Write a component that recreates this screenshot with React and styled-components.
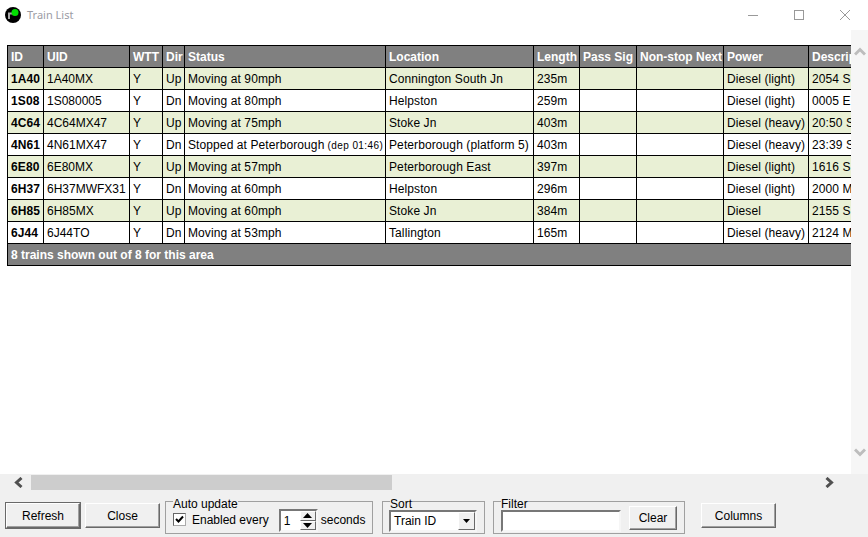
import React from 'react';
import styled, { createGlobalStyle } from 'styled-components';

const GlobalStyle = createGlobalStyle`
  html, body {
    margin: 0;
    padding: 0;
    overflow: hidden;
    background: #f0f0f0;
  }
`;

const Window = styled.div`
  width: 868px;
  height: 537px;
  display: flex;
  flex-direction: column;
  overflow: hidden;
  background: #f0f0f0;
  font-family: 'Liberation Sans', Arial, sans-serif;
`;

const TitleBar = styled.div`
  height: 30px;
  flex: none;
  display: flex;
  align-items: center;
  background: #fff;
  padding-left: 5px;
`;

const Title = styled.span`
  margin: 0 0 2px 6px;
  font-family: 'Noto Sans', sans-serif;
  font-size: 11px;
  color: #9c9ca4;
`;

const WindowButtons = styled.div`
  margin-left: auto;
  display: flex;
`;

const WindowButton = styled.div`
  width: 46px;
  height: 30px;
  display: flex;
  align-items: center;
  justify-content: center;
`;

const Middle = styled.div`
  height: 444px;
  flex: none;
  display: flex;
  background: #fff;
`;

const TableArea = styled.div`
  flex: 1;
  min-width: 0;
  overflow: hidden;
  padding: 15px 0 0 7px;
`;

const Table = styled.table`
  border-collapse: collapse;
  table-layout: fixed;
  width: 921px;
  font-size: 12px;
  color: #000;
`;

const HeadCell = styled.th`
  height: 21px;
  padding: 0 3px;
  border: 1px solid #000;
  background: #808080;
  color: #fff;
  font-weight: bold;
  text-align: left;
  white-space: nowrap;
  overflow: hidden;
`;

const Row = styled.tr`
  background: ${(p) => (p.$odd ? '#e9f0d5' : '#fff')};
`;

const Cell = styled.td`
  height: 21px;
  padding: 0 3px;
  border: 1px solid #000;
  font-weight: ${(p) => (p.$bold ? 'bold' : 'normal')};
  letter-spacing: ${(p) => (p.$tight ? '0' : '0.1px')};
  white-space: nowrap;
  overflow: hidden;
`;

const Footer = styled.td`
  height: 21px;
  padding: 0 3px;
  border: 1px solid #000;
  background: #808080;
  color: #fff;
  font-weight: bold;
  white-space: nowrap;
`;

const Small = styled.span`
  font-size: 10px;
  letter-spacing: 0.4px;
`;

const VScroll = styled.div`
  width: 17px;
  flex: none;
  display: flex;
  flex-direction: column;
  justify-content: space-between;
  align-items: center;
  background: #f6f6f6;
  padding: 17px 0 17px;
  box-sizing: border-box;
`;

const HScroll = styled.div`
  height: 17px;
  flex: none;
  display: flex;
  align-items: center;
  background: #f0f0f0;
`;

const ArrowBox = styled.div`
  width: 17px;
  flex: none;
  margin: ${(p) => p.$m};
  display: flex;
  align-items: center;
  justify-content: center;
`;

const HTrack = styled.div`
  flex: 1;
  height: 15px;
`;

const HThumb = styled.div`
  width: 361px;
  height: 100%;
  background: #cdcdcd;
`;

const Toolbar = styled.div`
  flex: 1;
  display: flex;
  align-items: flex-start;
  padding: 10px 0 0 5px;
`;

const Button = styled.button`
  width: ${(p) => p.$w}px;
  height: ${(p) => p.$h || 25}px;
  margin: ${(p) => p.$m || '0'};
  padding: 0;
  flex: none;
  background: #f0f0f0;
  border: 1px solid;
  border-color: #fff #696969 #696969 #fff;
  box-shadow: ${(p) =>
    p.$default
      ? '0 0 0 1px #696969, inset -1px -1px 0 #a0a0a0'
      : 'inset -1px -1px 0 #a0a0a0'};
  font-family: inherit;
  font-size: 12px;
  color: #000;
`;

const Group = styled.fieldset`
  box-sizing: border-box;
  width: ${(p) => p.$w}px;
  height: 33px;
  margin: 0 0 0 ${(p) => p.$ml}px;
  padding: 6px 0 0 ${(p) => p.$pl || 7}px;
  flex: none;
  display: flex;
  align-items: center;
  border: 1px solid #a0a0a0;
  font-size: 12px;
  position: relative;
`;

const Legend = styled.span`
  position: absolute;
  top: -4px;
  left: 7px;
  line-height: 12px;
  font-size: 12px;
  background: #f0f0f0;
`;

const CheckLabel = styled.label`
  display: flex;
  align-items: center;
  margin-bottom: 2px;
`;

const Check = styled.div`
  width: 11px;
  height: 11px;
  flex: none;
  border: 1px solid;
  border-color: #666 #aaa #aaa #666;
  background: #fff;
  display: flex;
  align-items: center;
  justify-content: center;
  margin-right: 6px;
`;

const SunkenField = styled.div`
  box-sizing: border-box;
  width: ${(p) => p.$w}px;
  height: ${(p) => p.$h}px;
  flex: none;
  display: flex;
  align-items: center;
  padding-left: 3px;
  margin: ${(p) => p.$m || '0'};
  background: #fff;
  border: 2px solid;
  border-color: #777 #f6f6f6 #f6f6f6 #777;
`;

const SpinButtons = styled.div`
  margin-left: auto;
  width: 16px;
  height: 100%;
  display: flex;
  flex-direction: column;
`;

const SpinButton = styled.div`
  flex: 1;
  background: #f0f0f0;
  border: 1px solid;
  border-color: #fff #696969 #696969 #fff;
  display: flex;
  align-items: center;
  justify-content: center;
`;

const DropButton = styled.div`
  margin-left: auto;
  width: 17px;
  height: 100%;
  box-sizing: border-box;
  background: #f0f0f0;
  border: 1px solid;
  border-color: #fff #696969 #696969 #fff;
  display: flex;
  align-items: center;
  justify-content: center;
`;

const columns = [36, 86, 33, 22, 201, 148, 46, 57, 87, 85, 120];
const heads = ['ID', 'UID', 'WTT', 'Dir', 'Status', 'Location', 'Length', 'Pass Sig', 'Non-stop Next', 'Power', 'Description'];

const trains = [
  ['1A40', '1A40MX', 'Up', 'Moving at 90mph', 'Connington South Jn', '235m', 'Diesel (light)', '2054 S'],
  ['1S08', '1S080005', 'Dn', 'Moving at 80mph', 'Helpston', '259m', 'Diesel (light)', '0005 E'],
  ['4C64', '4C64MX47', 'Up', 'Moving at 75mph', 'Stoke Jn', '403m', 'Diesel (heavy)', '20:50 S'],
  ['4N61', '4N61MX47', 'Dn', 'Stopped at Peterborough', 'Peterborough (platform 5)', '403m', 'Diesel (heavy)', '23:39 S'],
  ['6E80', '6E80MX', 'Up', 'Moving at 57mph', 'Peterborough East', '397m', 'Diesel (light)', '1616 S'],
  ['6H37', '6H37MWFX31', 'Dn', 'Moving at 60mph', 'Helpston', '296m', 'Diesel (light)', '2000 M'],
  ['6H85', '6H85MX', 'Up', 'Moving at 60mph', 'Stoke Jn', '384m', 'Diesel', '2155 S'],
  ['6J44', '6J44TO', 'Dn', 'Moving at 53mph', 'Tallington', '165m', 'Diesel (heavy)', '2124 M'],
];

const VChevron = ({ down }) => (
  <svg width="12" height="9" viewBox="0 0 12 9">
    <path d={down ? 'M1 1.5 L6 6.5 L11 1.5' : 'M1 7.5 L6 2.5 L11 7.5'} fill="none" stroke="#bdbdbd" strokeWidth="3" />
  </svg>
);

const HChevron = ({ right }) => (
  <svg width="9" height="11" viewBox="0 0 9 11">
    <path d={right ? 'M1.5 1 L6.5 5.5 L1.5 10' : 'M7.5 1 L2.5 5.5 L7.5 10'} fill="none" stroke="#505050" strokeWidth="3" />
  </svg>
);

const Triangle = ({ down, w = 7, h = 4 }) => (
  <svg width={w} height={h} viewBox={`0 0 ${w} ${h}`}>
    <path d={down ? `M0 0 H${w} L${w / 2} ${h} Z` : `M0 ${h} H${w} L${w / 2} 0 Z`} fill="#000" />
  </svg>
);

const Logo = () => (
  <svg width="16" height="16" viewBox="0 0 16 16">
    <circle cx="8" cy="8" r="8" fill="#000" />
    <path d="M4 12 V6.5 H8" fill="none" stroke="#aaa" strokeWidth="2" />
    <circle cx="10" cy="5.5" r="3.5" fill="#00e000" />
  </svg>
);

const App = () => {
  return (
    <Window>
      <GlobalStyle />
      <TitleBar>
        <Logo />
        <Title>Train List</Title>
        <WindowButtons>
          <WindowButton>
            <svg width="10" height="10" viewBox="0 0 10 10"><path d="M0 5.5 H10" stroke="#999" /></svg>
          </WindowButton>
          <WindowButton>
            <svg width="10" height="10" viewBox="0 0 10 10"><rect x="0.5" y="0.5" width="9" height="9" fill="none" stroke="#999" /></svg>
          </WindowButton>
          <WindowButton>
            <svg width="10" height="10" viewBox="0 0 10 10"><path d="M0 0 L10 10 M10 0 L0 10" stroke="#999" /></svg>
          </WindowButton>
        </WindowButtons>
      </TitleBar>
      <Middle>
        <TableArea>
          <Table>
            <colgroup>
              {columns.map((w, i) => <col key={i} style={{ width: w }} />)}
            </colgroup>
            <thead>
              <tr>
                {heads.map((h) => <HeadCell key={h}>{h}</HeadCell>)}
              </tr>
            </thead>
            <tbody>
              {trains.map((t, i) => (
                <Row key={t[0]} $odd={i % 2 === 0}>
                  <Cell $bold>{t[0]}</Cell>
                  <Cell $tight>{t[1]}</Cell>
                  <Cell>Y</Cell>
                  <Cell>{t[2]}</Cell>
                  <Cell>
                    {t[3]}
                    {t[0] === '4N61' && <Small> (dep 01:46)</Small>}
                  </Cell>
                  <Cell>{t[4]}</Cell>
                  <Cell>{t[5]}</Cell>
                  <Cell />
                  <Cell />
                  <Cell>{t[6]}</Cell>
                  <Cell>{t[7]}</Cell>
                </Row>
              ))}
              <tr>
                <Footer colSpan={11}>8 trains shown out of 8 for this area</Footer>
              </tr>
            </tbody>
          </Table>
        </TableArea>
        <VScroll>
          <VChevron />
          <VChevron down />
        </VScroll>
      </Middle>
      <HScroll>
        <ArrowBox $m="0 4px 0 10px"><HChevron /></ArrowBox>
        <HTrack><HThumb /></HTrack>
        <ArrowBox $m="0 30px 0 0"><HChevron right /></ArrowBox>
      </HScroll>
      <Toolbar>
        <Button $w={74} $default $m="2px 0 0 1px">Refresh</Button>
        <Button $w={75} $m="2px 0 0 5px">Close</Button>
        <Group $w={208} $ml={5}>
          <Legend>Auto update</Legend>
          <CheckLabel>
            <Check>
              <svg width="9" height="9" viewBox="0 0 9 9"><path d="M1 4 L3.5 6.5 L8 1.5" fill="none" stroke="#000" strokeWidth="2" /></svg>
            </Check>
            Enabled every
          </CheckLabel>
          <SunkenField $w={39} $h={23} $m="0 3px 0 10px">
            1
            <SpinButtons>
              <SpinButton><Triangle w={9} h={5} /></SpinButton>
              <SpinButton><Triangle w={9} h={5} down /></SpinButton>
            </SpinButtons>
          </SunkenField>
          <CheckLabel>seconds</CheckLabel>
        </Group>
        <Group $w={103} $ml={9} $pl={6}>
          <Legend>Sort</Legend>
          <SunkenField $w={88} $h={22}>
            Train ID
            <DropButton><Triangle down /></DropButton>
          </SunkenField>
        </Group>
        <Group $w={192} $ml={8}>
          <Legend>Filter</Legend>
          <SunkenField $w={120} $h={22} />
          <Button $w={48} $h={24} $m="0 0 6px 8px">Clear</Button>
        </Group>
        <Button $w={75} $m="2px 0 0 16px">Columns</Button>
      </Toolbar>
    </Window>
  );
};

export default App;
